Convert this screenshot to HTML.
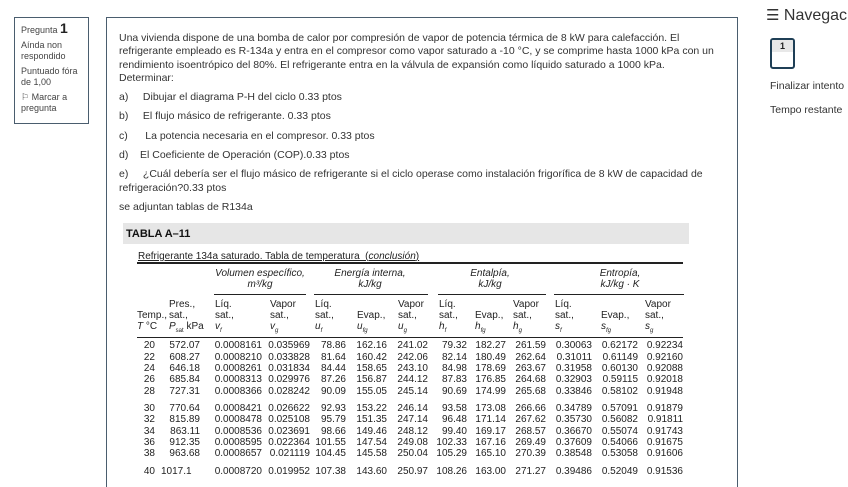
<!DOCTYPE html>
<html><head><meta charset="utf-8"><style>
*{margin:0;padding:0;box-sizing:border-box}
body{width:848px;height:477px;overflow:hidden;background:#fff;font-family:"Liberation Sans",sans-serif;color:#333;position:relative}
.info{position:absolute;left:14px;top:17px;width:75px;height:107px;border:1px solid #4a5d6e;padding:5px 6px;font-size:9px;line-height:11px;color:#444}
.info p{margin-bottom:4px}
.main{position:absolute;left:106px;top:17px;width:632px;height:470px;border:1px solid #4a5d6e;border-bottom:none}
.q{position:absolute;left:119px;top:32px;width:612px;font-size:10.5px;line-height:13.3px;color:#333;white-space:nowrap}
.q p{margin-bottom:6px}
.q .it{margin-bottom:6px}
.bar{position:absolute;left:123px;top:223px;width:566px;height:21px;background:#e6e6e6;font-weight:bold;font-size:11px;padding:5px 0 0 3px;color:#111;font-family:"Liberation Sans Narrow","Liberation Sans",sans-serif}
.t{position:absolute;font-size:10px;color:#222;white-space:nowrap;line-height:11px}
.hl{position:absolute;background:#222}
table{position:absolute;left:137px;top:340px;border-collapse:collapse;font-size:10px;color:#222}
td{text-align:right;padding:0 2px 0 0;height:11.4px;line-height:11px;white-space:nowrap}
tr.gap td{padding-top:6px}
.nav{position:absolute;left:766px;top:6px;font-size:16px;color:#333}
</style></head><body>
<div class="info">
<p>Pregunta <b style="font-size:14px;color:#222">1</b></p>
<p>Aínda non respondido</p>
<p>Puntuado fóra de 1,00</p>
<p>⚐ Marcar a pregunta</p>
</div>
<div class="main"></div>
<div class="q">
<p>Una vivienda dispone de una bomba de calor por compresión de vapor de potencia térmica de 8 kW para calefacción. El<br>refrigerante empleado es R-134a y entra en el compresor como vapor saturado a -10 °C, y se comprime hasta 1000 kPa con un<br>rendimiento isoentrópico del 80%. El refrigerante entra en la válvula de expansión como líquido saturado a 1000 kPa.<br>Determinar:</p>
<p class="it">a)&nbsp;&nbsp;&nbsp;&nbsp;&nbsp;Dibujar el diagrama P-H del ciclo 0.33 ptos</p>
<p class="it">b)&nbsp;&nbsp;&nbsp;&nbsp;&nbsp;El flujo másico de refrigerante. 0.33 ptos</p>
<p class="it">c)&nbsp;&nbsp;&nbsp;&nbsp;&nbsp;&nbsp;La potencia necesaria en el compresor. 0.33 ptos</p>
<p class="it">d)&nbsp;&nbsp;&nbsp;&nbsp;El Coeficiente de Operación (COP).0.33 ptos</p>
<p style="margin-bottom:6px">e)&nbsp;&nbsp;&nbsp;&nbsp;&nbsp;¿Cuál debería ser el flujo másico de refrigerante si el ciclo operase como instalación frigorífica de 8 kW de capacidad de<br>refrigeración?0.33 ptos</p>
<p>se adjuntan tablas de R134a</p>
</div>
<div class="bar">TABLA A–11</div>
<div class="t" style="left:138px;top:251px;text-decoration:underline">Refrigerante 134a saturado. Tabla de temperatura &nbsp;(<i>conclusión</i>)</div>
<div class="hl" style="left:137px;top:262px;width:546px;height:2px"></div>
<div class="t" style="left:214px;top:268px;text-align:center;width:92px;font-style:italic">Volumen específico,<br>m³/kg</div>
<div class="t" style="left:320px;top:268px;text-align:center;width:100px;font-style:italic">Energía interna,<br>kJ/kg</div>
<div class="t" style="left:440px;top:268px;text-align:center;width:100px;font-style:italic">Entalpía,<br>kJ/kg</div>
<div class="t" style="left:565px;top:268px;text-align:center;width:110px;font-style:italic">Entropía,<br>kJ/kg · K</div>
<div class="hl" style="left:214px;top:294px;width:92px;height:1px"></div>
<div class="hl" style="left:314px;top:294px;width:114px;height:1px"></div>
<div class="hl" style="left:438px;top:294px;width:108px;height:1px"></div>
<div class="hl" style="left:554px;top:294px;width:130px;height:1px"></div>
<div class="t" style="left:137px;top:299px">&nbsp;<br>Temp.,<br><i>T</i> °C</div>
<div class="t" style="left:169px;top:299px">Pres.,<br>sat.,<br><i>P</i><sub style="font-size:6px">sat</sub> kPa</div>
<div class="t" style="left:215px;top:299px">Líq.<br>sat.,<br><i>v<sub style="font-size:6px">f</sub></i></div>
<div class="t" style="left:270px;top:299px">Vapor<br>sat.,<br><i>v<sub style="font-size:6px">g</sub></i></div>
<div class="t" style="left:315px;top:299px">Líq.<br>sat.,<br><i>u<sub style="font-size:6px">f</sub></i></div>
<div class="t" style="left:357px;top:299px">&nbsp;<br>Evap.,<br><i>u<sub style="font-size:6px">fg</sub></i></div>
<div class="t" style="left:398px;top:299px">Vapor<br>sat.,<br><i>u<sub style="font-size:6px">g</sub></i></div>
<div class="t" style="left:439px;top:299px">Líq.<br>sat.,<br><i>h<sub style="font-size:6px">f</sub></i></div>
<div class="t" style="left:475px;top:299px">&nbsp;<br>Evap.,<br><i>h<sub style="font-size:6px">fg</sub></i></div>
<div class="t" style="left:513px;top:299px">Vapor<br>sat.,<br><i>h<sub style="font-size:6px">g</sub></i></div>
<div class="t" style="left:555px;top:299px">Líq.<br>sat.,<br><i>s<sub style="font-size:6px">f</sub></i></div>
<div class="t" style="left:601px;top:299px">&nbsp;<br>Evap.,<br><i>s<sub style="font-size:6px">fg</sub></i></div>
<div class="t" style="left:645px;top:299px">Vapor<br>sat.,<br><i>s<sub style="font-size:6px">g</sub></i></div>
<div class="hl" style="left:137px;top:337px;width:546px;height:1px"></div>
<table>
<colgroup><col style="width:20px"><col style="width:45px"><col style="width:62px"><col style="width:48px"><col style="width:36px"><col style="width:41px"><col style="width:41px"><col style="width:39px"><col style="width:39px"><col style="width:40px"><col style="width:46px"><col style="width:46px"><col style="width:45px"></colgroup>
<tr><td>20</td><td>572.07</td><td>0.0008161</td><td>0.035969</td><td>78.86</td><td>162.16</td><td>241.02</td><td>79.32</td><td>182.27</td><td>261.59</td><td>0.30063</td><td>0.62172</td><td>0.92234</td></tr>
<tr><td>22</td><td>608.27</td><td>0.0008210</td><td>0.033828</td><td>81.64</td><td>160.42</td><td>242.06</td><td>82.14</td><td>180.49</td><td>262.64</td><td>0.31011</td><td>0.61149</td><td>0.92160</td></tr>
<tr><td>24</td><td>646.18</td><td>0.0008261</td><td>0.031834</td><td>84.44</td><td>158.65</td><td>243.10</td><td>84.98</td><td>178.69</td><td>263.67</td><td>0.31958</td><td>0.60130</td><td>0.92088</td></tr>
<tr><td>26</td><td>685.84</td><td>0.0008313</td><td>0.029976</td><td>87.26</td><td>156.87</td><td>244.12</td><td>87.83</td><td>176.85</td><td>264.68</td><td>0.32903</td><td>0.59115</td><td>0.92018</td></tr>
<tr><td>28</td><td>727.31</td><td>0.0008366</td><td>0.028242</td><td>90.09</td><td>155.05</td><td>245.14</td><td>90.69</td><td>174.99</td><td>265.68</td><td>0.33846</td><td>0.58102</td><td>0.91948</td></tr>
<tr class="gap"><td>30</td><td>770.64</td><td>0.0008421</td><td>0.026622</td><td>92.93</td><td>153.22</td><td>246.14</td><td>93.58</td><td>173.08</td><td>266.66</td><td>0.34789</td><td>0.57091</td><td>0.91879</td></tr>
<tr><td>32</td><td>815.89</td><td>0.0008478</td><td>0.025108</td><td>95.79</td><td>151.35</td><td>247.14</td><td>96.48</td><td>171.14</td><td>267.62</td><td>0.35730</td><td>0.56082</td><td>0.91811</td></tr>
<tr><td>34</td><td>863.11</td><td>0.0008536</td><td>0.023691</td><td>98.66</td><td>149.46</td><td>248.12</td><td>99.40</td><td>169.17</td><td>268.57</td><td>0.36670</td><td>0.55074</td><td>0.91743</td></tr>
<tr><td>36</td><td>912.35</td><td>0.0008595</td><td>0.022364</td><td>101.55</td><td>147.54</td><td>249.08</td><td>102.33</td><td>167.16</td><td>269.49</td><td>0.37609</td><td>0.54066</td><td>0.91675</td></tr>
<tr><td>38</td><td>963.68</td><td>0.0008657</td><td>0.021119</td><td>104.45</td><td>145.58</td><td>250.04</td><td>105.29</td><td>165.10</td><td>270.39</td><td>0.38548</td><td>0.53058</td><td>0.91606</td></tr>
<tr class="gap"><td>40</td><td style="text-align:left;padding-left:4px">1017.1</td><td>0.0008720</td><td>0.019952</td><td>107.38</td><td>143.60</td><td>250.97</td><td>108.26</td><td>163.00</td><td>271.27</td><td>0.39486</td><td>0.52049</td><td>0.91536</td></tr>
</table>
<div class="nav"><span style="font-size:15px">☰</span> Navegac</div>
<div style="position:absolute;left:770px;top:38px;width:25px;height:31px;border:2px solid #1f3f56;border-radius:3px;overflow:hidden"><div style="background:#e8e8e8;height:12px;font-size:9px;font-weight:bold;text-align:center;line-height:12px;color:#222">1</div></div>
<div style="position:absolute;left:770px;top:80px;font-size:10.5px;color:#333">Finalizar intento</div>
<div style="position:absolute;left:770px;top:104px;font-size:10.5px;color:#333">Tempo restante</div>
</body></html>
